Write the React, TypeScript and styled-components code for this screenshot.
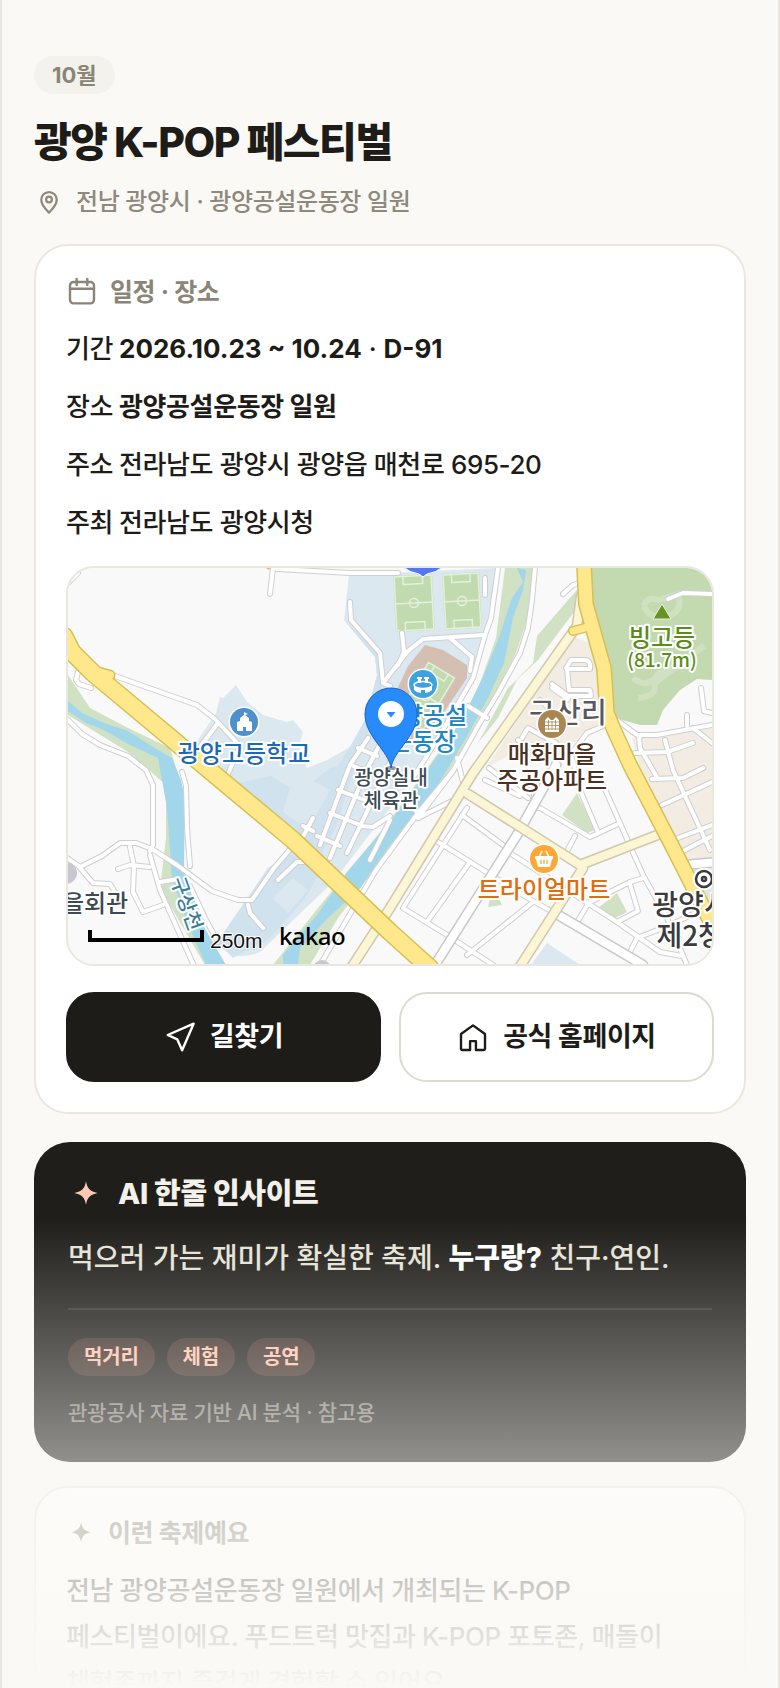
import React from "react";
import styled, { createGlobalStyle } from "styled-components";

const GlobalStyle = createGlobalStyle`
  *, *::before, *::after { box-sizing: border-box; }
  body {
    margin: 0;
    background: #faf9f5;
    color: #1d1c18;
    font-family: Inter, "Noto Sans CJK KR", sans-serif;
    font-weight: 500;
    letter-spacing: -0.025em;
    word-break: keep-all;
  }
  h1, h2, p, ul, dl, dd { margin: 0; padding: 0; }
  strong { font-weight: 700; }
`;

const Shell = styled.main`
  position: relative;
  height: 100vh;
  overflow: hidden;
  padding: 56px 32px 0;
  border: 2px solid #e9e7df;
  border-width: 0 2px;
  background: #faf9f5;
`;

const MonthBadge = styled.span`
  padding: 0 18px;
  border-radius: 19px;
  background: #f3f2ed;
  color: #8a8577;
  font-size: 22px;
  line-height: 38px;
  font-weight: 700;
  letter-spacing: 0;
`;

const Header = styled.header`
  display: flex;
  flex-direction: column;
  align-items: flex-start;
  margin-bottom: 24px;
`;

const Title = styled.h1`
  margin-top: 20px;
  font-size: 41px;
  line-height: 56px;
  font-weight: 800;
  letter-spacing: -0.035em;
`;

const Location = styled.p`
  display: flex;
  align-items: center;
  gap: 12px;
  margin-top: 14px;
  color: #8f897c;
  font-size: 24px;
  line-height: 36px;
`;

const Card = styled.section`
  padding: 30px;
  border: 2px solid #e9e7df;
  border-radius: 34px;
  background: #fff;
`;

const CardTitle = styled.h2`
  display: flex;
  align-items: center;
  gap: 12px;
  color: #8a8577;
  font-size: 25px;
  line-height: 30px;
  font-weight: 700;
`;

const InfoList = styled.dl`
  display: flex;
  flex-direction: column;
  gap: 12px;
  margin: 18px 0 20px;
`;

const InfoRow = styled.div<{ $numeric?: boolean }>`
  display: flex;
  gap: 6px;
  font-size: 26px;
  line-height: 46px;

  dd { letter-spacing: ${(p) => (p.$numeric ? "0" : "inherit")}; }
`;

const MapFrame = styled.div`
  height: 400px;
  overflow: hidden;
  border: 2px solid #e9e7df;
  border-radius: 28px;
  background: #f9f9f9;

  svg { display: block; width: 100%; height: 100%; }
`;

const Actions = styled.div`
  display: grid;
  grid-template-columns: 1fr 1fr;
  gap: 18px;
  margin-top: 26px;
`;

const Action = styled.a<{ $primary?: boolean }>`
  display: flex;
  align-items: center;
  justify-content: center;
  gap: 14px;
  height: 90px;
  border: 2px solid ${(p) => (p.$primary ? "#1d1c18" : "#dddad0")};
  border-radius: 28px;
  background: ${(p) => (p.$primary ? "#1d1c18" : "#fff")};
  color: ${(p) => (p.$primary ? "#fff" : "#1d1c18")};
  font-size: 27px;
  line-height: 36px;
  font-weight: 700;
  text-decoration: none;
`;

const InsightCard = styled.section`
  margin: 28px 0 24px;
  padding: 34px;
  border-radius: 36px;
  background: #1f1e1a;
`;

const InsightTitle = styled.h2`
  display: flex;
  align-items: center;
  gap: 14px;
  color: #f4f1ea;
  font-size: 29px;
  line-height: 34px;
  font-weight: 800;
  letter-spacing: -0.01em;

  svg { color: #fdc9b5; }
`;

const InsightText = styled.p`
  margin: 22px 0 26px;
  color: #e6e2d6;
  font-size: 28px;
  line-height: 48px;
  letter-spacing: 0;

  strong { color: #fff; font-weight: 800; }
`;

const TagList = styled.ul`
  display: flex;
  gap: 12px;
  padding-top: 28px;
  border-top: 2px solid rgba(255, 255, 255, 0.1);
  list-style: none;
`;

const Tag = styled.li`
  padding: 0 16px;
  border-radius: 19px;
  background: rgba(255, 150, 125, 0.15);
  color: #ffc3ad;
  font-size: 20px;
  line-height: 38px;
  font-weight: 700;
  letter-spacing: -0.01em;
`;

const InsightNote = styled.p`
  margin-top: 22px;
  color: #858178;
  font-size: 21px;
  line-height: 30px;
  letter-spacing: -0.01em;
`;

const Description = styled.p`
  margin-top: 20px;
  font-size: 26px;
  line-height: 46px;
`;

const BottomFade = styled.div`
  position: absolute;
  inset: auto 0 0 0;
  height: 470px;
  margin: 0 -2px;
  background: linear-gradient(to bottom, rgba(250, 249, 245, 0), #faf9f5);
  pointer-events: none;
`;

const LineIcon = ({ size = 32, children }: { size?: number; children: React.ReactNode }) => (
  <svg width={size} height={size} viewBox="0 0 24 24" fill="none" stroke="currentColor"
    strokeWidth="1.8" strokeLinecap="round" strokeLinejoin="round" aria-hidden="true">
    {children}
  </svg>
);

const Spark = ({ size }: { size: number }) => (
  <svg width={size} height={size} viewBox="0 0 24 24" fill="currentColor" aria-hidden="true">
    <path d="M12 3.500C12.900 8.300 14.600 10.300 19.800 11.300C14.600 12.300 12.900 14.300 12 19.200C11.100 14.300 9.400 12.300 4.200 11.300C9.400 10.300 11.100 8.300 12 3.500Z" />
  </svg>
);

const minorRoads = [
  "M47 108L129 137L147 151L172 178L160 206", "M150 155L132 179", "M10 104L8 112L11 116L23 120",
  "M205 0L202 26", "M209 1L282 5L330 5", "M0 15L10 5",
  "M0 152L14 166L32 177L60 188L78 202L85 217V277L82 283",
  "M-8 285L12 299L34 288L52 275H68L84 281L109 297L144 323L170 332H184L206 300L225 278",
  "M114 204L118 218L119 260L122 298", "M82 287L92 322L127 400", "M62 279L66 298L65 324L75 344L95 337",
  "M12 300L25 315L42 316L47 324", "M50 301L62 297L82 299", "M92 314L110 311",
  "M122 318L138 352L150 374", "M180 337L182 345L195 360", "M210 312L229 294H242",
  "M282 34L283 52L312 85L315 115L322 118", "M315 115L340 83L355 71L415 67",
  "M382 70L404 89L402 103", "M334 65L336 84L330 97", "M417 10V27",
  "M430 0L423 50L417 67L405 110L372 167L345 210",
  "M300 170L282 197L252 277", "M312 176L297 205L262 290", "M322 194L296 250L279 285",
  "M270 222L302 234", "M262 245L292 257", "M249 268L272 278", "M283 197L307 207", "M290 180L309 188",
  "M245 250L236 267L225 278", "M235 258L245 263", "M292 258L305 259L322 248", "M322 252L302 292",
  "M467 0L464 32L460 60L452 85L430 125L410 158L385 203L350 245L308 302L252 397",
  "M400 138L419 150", "M340 235L352 247", "M385 203L350 250", "M389 190L398 226L350 250",
  "M495 26L505 17L514 14",
  "M498 100L503 92H518Q523 93 522 101H499L501 122H522L523 128H500L484 116M484 120L500 131",
  "M472 132L480 139M454 170L460 160L488 175M458 180L450 172M500 190L519 165L535 158",
  "M549 152L569 167H589L644 157", "M619 147V158", "M567 185L599 184L625 175", "M571 168L572 180L590 211",
  "M597 172L605 202L642 282", "M633 120L636 143L644 145", "M584 211L615 210L635 200",
  "M594 237L644 214", "M610 270L644 257", "M615 283L644 268", "M644 175L625 160",
  "M399 240L335 340L379 367L425 397", "M367 272L460 330L495 350", "M394 247L435 277", "M402 294L359 354",
  "M465 334L399 387", "M421 200L460 230", "M417 212L452 228", "M472 240L522 269L552 255", "M507 268L497 287",
  "M512 222L529 262", "M532 210L575 307L599 350L619 397", "M442 285L549 354L592 384L614 388",
  "M522 334L562 314L575 310M562 316L570 343L549 354", "M562 384L569 370L600 358L642 338",
  "M504 190L512 222", "M520 336L508 356", "M462 214L470 240", "M600 31L615 25L644 26",
];

const arterials = ["M488 197L449 267L367 397", "M492 348L575 397", "M617 297L650 294"];

const paleRoads = [
  "M513 28L509 58L405 205L322 340L283 400",
  "M400 226L512 297L592 266", "M515 300L451 400",
];

const highways = [
  { d: "M-4 68L4 84L25 105L225 272L322 364L362 400", w: 16 },
  { d: "M516 -4L518 36L530 79L536 100L539 145L546 162L562 197L600 270L656 380", w: 13 },
  { d: "M27 103L42 107", w: 8 },
  { d: "M505 63L520 59", w: 7 },
];

const Pitch = ({ x, y, rotate = 0, w = 39, h = 56 }: { x: number; y: number; rotate?: number; w?: number; h?: number }) => (
  <g transform={`translate(${x} ${y}) rotate(${rotate})`}>
    <rect x={-w / 2} y={-h / 2} width={w} height={h} fill="#c1dab0" />
    <g fill="none" stroke="#e4f0da" strokeWidth="1.5">
      <rect x={-w / 2 + 1} y={-h / 2 + 1} width={w - 2} height={h - 2} />
      <path d={`M${-w / 2} 0H${w / 2}`} />
      <circle r="4.5" />
      <path d={`M${-w / 4} ${-h / 2}v9h${w / 2}v-9M${-w / 4} ${h / 2}v-9h${w / 2}v9`} />
    </g>
  </g>
);

const MapLabel = styled.text<{ $size?: number }>`
  font-family: "Noto Sans CJK KR", sans-serif;
  font-size: ${(p) => p.$size ?? 24}px;
  font-weight: 500;
  letter-spacing: 0;
  text-anchor: middle;
  paint-order: stroke;
  stroke: #fff;
  stroke-width: 4px;
  stroke-linejoin: round;
`;

const ScaleLabel = styled.text`
  font: 21px "Liberation Sans", sans-serif;
  letter-spacing: 0;
  paint-order: stroke;
  stroke: #fff;
  stroke-width: 2px;
`;

const MapBrand = styled.text`
  font: 500 24px "Noto Sans", sans-serif;
  letter-spacing: -0.025em;
`;

const Poi = ({ x, y, color, children }: { x: number; y: number; color: string; children: React.ReactNode }) => (
  <g transform={`translate(${x} ${y})`}>
    <circle r="15.5" fill="#fff" />
    <circle r="14" fill={color} />
    {children}
  </g>
);

const VenueMap = () => (
  <svg viewBox="0 0 644 396" preserveAspectRatio="xMidYMid slice" role="img" aria-label="광양공설운동장 지도">
    <rect width="644" height="396" fill="#f9f9f9" />

    {/* campus and public grounds */}
    <path fill="#dbe8f0" d="M281 7L428 0L417 67L405 109L345 210L265 314L192 384Q165 396 149 374L175 344L222 277L150 212L122 188L130 172L148 145L152 129L155 130L168 117L179 134L195 147L219 154L225 152L235 164L231 179L239 200L259 192L282 179L297 152L309 107L307 89L276 52Z" />
    <path fill="#d0e2ee" d="M276 52L312 87L315 115L300 165L284 197L265 205L282 179L297 152L309 107L307 89ZM203 208L230 225L262 200L290 190L268 260L250 292L225 272L160 217ZM200 300L222 285L252 305L236 332L200 372L165 390L149 374Z" />
    <path fill="#dbe8f0" d="M222 220L240 210L262 222L240 262L215 244ZM205 330L225 310L240 322L220 345Z" />

    {/* hillside, parks and river banks */}
    <path fill="#c3dab0" d="M523 0H644V112L629 111L612 122L595 142L589 157H572L544 149L540 92L525 49Z" />
    <path fill="none" stroke="#cfe1c1" strokeWidth="6" d="M576 38Q578 28 590 32L610 26Q616 45 598 48Q582 52 576 38M565 110Q580 122 590 106L620 92M570 130Q590 128 586 116Q600 104 636 78" />
    <path fill="#d0e1c4" d="M437 0H465L460 50L448 85L425 130L380 205L330 270L270 350L242 397H205L250 340L322 252L395 150L412 115L428 70ZM514 16L469 68L465 95L450 110L430 150L410 175L440 120L470 92L509 40Z" />
    <path fill="#d0e1c4" d="M0 107L22 140L60 160L102 180L112 215L116 300L125 330L150 397H137L92 320L98 270L98 217L60 184L0 147Z" />
    <path fill="#d0e1c4" d="M509 225L527 262L519 265L494 247ZM549 325L559 344L547 350L530 340ZM425 317L434 337L420 339Z" />

    {/* housing blocks */}
    <path fill="#f3ece2" d="M505 68L528 78L534 100L536 158L505 175L490 190L440 188L418 200Z" />
    <path fill="#f3ece2" d="M564 170L644 160V290L618 294L600 255L572 200Z" />
    <path fill="#dbe8f0" d="M479 375L512 397H463ZM618 300L644 296V350Z" />

    {/* water */}
    <path fill="#a2d6eb" d="M449 0L458 2L455 22L445 50L439 80L436 95L420 130L398 170L365 225L322 277L292 320L258 352L232 380L230 397H215V387L249 347L279 304L322 254L359 203L395 150L415 109L430 72L444 30L455 14Z" />
    <path fill="#a2d6eb" d="M0 133L14 145L36 155L60 163L88 181L104 190L113 212L117 230L116 300L128 345L158 397H138L118 352L104 310L99 240L90 190L60 176L36 162L18 155L0 143Z" />

    {/* stadium and pitches */}
    <path fill="#d5bfb2" d="M357 77L375 82L399 97V110L372 150L345 175L328 168L325 130L340 98Z" />
    <Pitch x={358} y={128} rotate={31} w={32} h={62} />
    <Pitch x={346} y={35} rotate={-3} />
    <Pitch x={394} y={33} rotate={-3} w={37} />

    {/* streets: casing first, then surface */}
    <g fill="none" strokeLinejoin="round" strokeLinecap="round">
      {minorRoads.map((d) => <path key={d} d={d} stroke="#cfcfd2" strokeWidth="6" />)}
      {minorRoads.map((d) => <path key={d} d={d} stroke="#fff" strokeWidth="4" />)}
      {arterials.map((d) => <path key={d} d={d} stroke="#c8c8ca" strokeWidth="11" />)}
      {arterials.map((d) => <path key={d} d={d} stroke="#fff" strokeWidth="8" />)}
      {paleRoads.map((d) => <path key={d} d={d} stroke="#cfc9b0" strokeWidth="11" />)}
      {paleRoads.map((d) => <path key={d} d={d} stroke="#fcf6d4" strokeWidth="8" />)}
      {highways.map(({ d, w }) => <path key={d} d={d} stroke="#d6c055" strokeWidth={w + 3} />)}
      {highways.map(({ d, w }) => <path key={d} d={d} stroke="#ffe88b" strokeWidth={w} />)}
    </g>

    <circle cx="-2" cy="305" r="11" fill="#c9c8d0" />
    <path d="M196 -1H203L201 2Z" fill="#ffb84d" />
    <circle cx="254" cy="401" r="9" fill="#c9c8d0" />
    <path d="M334 -2Q342 5 351 6L355 9L359 6Q368 5 376 -2Z" fill="#5577f2" stroke="#fff" />

    <path d="M594 36L603 51H585Z" fill="#669322" stroke="#e6f0da" strokeWidth="1" />
    <MapLabel x="594" y="78" fill="#5d8c1a">빙고등</MapLabel>
    <MapLabel x="594" y="99" $size={19} fill="#5d8c1a">(81.7m)</MapLabel>

    <MapLabel x="500" y="155" $size={28} fill="#59595b">구산리</MapLabel>
    <MapLabel x="355" y="156" fill="#2485c3">광양공설</MapLabel>
    <MapLabel x="355" y="182" fill="#2485c3">운동장</MapLabel>
    <MapLabel x="176" y="194" fill="#1f68b2">광양고등학교</MapLabel>
    <MapLabel x="484" y="195" fill="#4b3124">매화마을</MapLabel>
    <MapLabel x="484" y="221" fill="#4b3124">주공아파트</MapLabel>
    <MapLabel x="476" y="330" fill="#e06d0e">트라이얼마트</MapLabel>
    <MapLabel x="323" y="217" $size={20} fill="#3c4a54">광양실내</MapLabel>
    <MapLabel x="323" y="240" $size={20} fill="#3c4a54">체육관</MapLabel>
    <MapLabel x="16" y="344" fill="#3c4a54">마을회관</MapLabel>
    <MapLabel x="623" y="347" $size={28} fill="#3b3b3d">광양시</MapLabel>
    <MapLabel x="635" y="378" $size={28} fill="#3b3b3d">제2청사</MapLabel>
    <MapLabel transform="translate(112 338) rotate(70)" $size={20} fill="#3d7d98">구상천</MapLabel>

    <Poi x={176} y={154} color="#4e90cc">
      <path fill="#fff" d="M-7 9V0L-4 -1V-4L0 -7V-10L4 -8L1 -7L5 -4V-1L8 0V9H2V5H-1V9Z" />
    </Poi>
    <Poi x={355} y={116} color="#3ea2df">
      <path fill="#fff" d="M-6 -7H-1V-5H-2V-1H-5V-5H-6ZM1 -7H6V-5H5V-1H2V-5H1Z" />
      <ellipse cx="0" cy="1" rx="9" ry="3.500" fill="none" stroke="#fff" strokeWidth="1.500" />
      <path fill="#fff" d="M-9 2Q0 7 9 2V6Q6 9 2 9V6H-2V9Q-6 9 -9 6Z" />
    </Poi>
    <Poi x={484} y={156} color="#aa8653">
      <path fill="#fff" d="M-7 8V-4L-4 -7L-1 -4H1L4 -7L7 -4V8Z" />
      <path stroke="#aa8653" d="M-7 -2H7M-7 1.500H7M-7 5H7M-3.500 -4V6M0 -3V6M3.500 -4V6" strokeWidth=".8" />
    </Poi>
    <Poi x={476} y={291} color="#ffa735">
      <path fill="none" stroke="#fff" strokeWidth="1.5" d="M-5 -2L-2 -8M5 -2L2 -8" />
      <path fill="#fff" d="M-9 -3H9V0H8L6 8H-6L-8 0H-9Z" />
      <path stroke="#ffa735" strokeWidth="1.3" d="M-3 1V5M0 1V5M3 1V5" />
    </Poi>
    <g fill="#fff" stroke="#3b3b3d" strokeWidth="2.500">
      <circle cx="636" cy="311" r="10" stroke="#fff" />
      <circle cx="636" cy="311" r="8" />
      <circle cx="636" cy="311" r="2" />
    </g>

    {/* venue marker */}
    <ellipse cx="323" cy="200" rx="5" ry="2" fill="#000" opacity=".35" />
    <path d="M323 200C321 183 297 169 297 146A26 26 0 0 1 349 146C349 169 325 183 323 200Z" fill="#278bfb" stroke="#1c63c4" />
    <circle cx="323" cy="146" r="13" fill="#fff" />
    <path d="M318.500 144H327.500L323 149.500Z" fill="#278bfb" />

    <path d="M22 362V372H134V362" fill="none" stroke="#000" strokeWidth="4" />
    <ScaleLabel x="142" y="380" fill="#111">250m</ScaleLabel>
    <MapBrand x="211" y="377" fill="#000">kakao</MapBrand>
  </svg>
);

export default function App() {
  return (
    <>
      <GlobalStyle />
      <Shell>
        <Header>
          <MonthBadge>10월</MonthBadge>
          <Title>광양 K-POP 페스티벌</Title>
          <Location>
            <LineIcon size={30}>
              <path d="M12 20.500C9.500 18 5.800 14.500 5.800 10.200a6.200 6.200 0 0 1 12.400 0C18.200 14.500 14.500 18 12 20.500Z" />
              <circle cx="12" cy="10" r="2.300" />
            </LineIcon>
            전남 광양시 · 광양공설운동장 일원
          </Location>
        </Header>

        <Card>
          <CardTitle>
            <LineIcon>
              <rect x="3" y="4.500" width="18" height="16" rx="2.600" />
              <path d="M3 9.600h18M8 2.200v4.500M16 2.200v4.500" />
            </LineIcon>
            일정 · 장소
          </CardTitle>
          <InfoList>
            <InfoRow $numeric><dt>기간</dt><dd><strong>2026.10.23 ~ 10.24</strong> · <strong>D-91</strong></dd></InfoRow>
            <InfoRow><dt>장소</dt><dd><strong>광양공설운동장 일원</strong></dd></InfoRow>
            <InfoRow><dt>주소</dt><dd>전라남도 광양시 광양읍 매천로 695-20</dd></InfoRow>
            <InfoRow><dt>주최</dt><dd>전라남도 광양시청</dd></InfoRow>
          </InfoList>
          <MapFrame><VenueMap /></MapFrame>
          <Actions>
            <Action href="#directions" $primary>
              <LineIcon><path d="M22.200 2 2.800 10.500l7.200 3.300 3.600 8.200Z" /></LineIcon>
              길찾기
            </Action>
            <Action href="#homepage">
              <LineIcon><path d="M12 3.300 3 9.800v11a.9.9 0 0 0 .9.9h5.900v-6.600h4.400v6.600h5.900a.9.9 0 0 0 .9-.9v-11Z" /></LineIcon>
              공식 홈페이지
            </Action>
          </Actions>
        </Card>

        <InsightCard>
          <InsightTitle><Spark size={36} />AI 한줄 인사이트</InsightTitle>
          <InsightText>
            먹으러 가는 재미가 확실한 축제. <strong>누구랑?</strong> 친구·연인.
          </InsightText>
          <TagList>
            <Tag>먹거리</Tag>
            <Tag>체험</Tag>
            <Tag>공연</Tag>
          </TagList>
          <InsightNote>관광공사 자료 기반 AI 분석 · 참고용</InsightNote>
        </InsightCard>

        <Card>
          <CardTitle><Spark size={30} />이런 축제예요</CardTitle>
          <Description>
            전남 광양공설운동장 일원에서 개최되는 K-POP 페스티벌이에요. 푸드트럭 맛집과 K-POP 포토존, 매돌이 체험존까지 즐겁게 경험할 수 있어요.
          </Description>
        </Card>
        <BottomFade />
      </Shell>
    </>
  );
}
